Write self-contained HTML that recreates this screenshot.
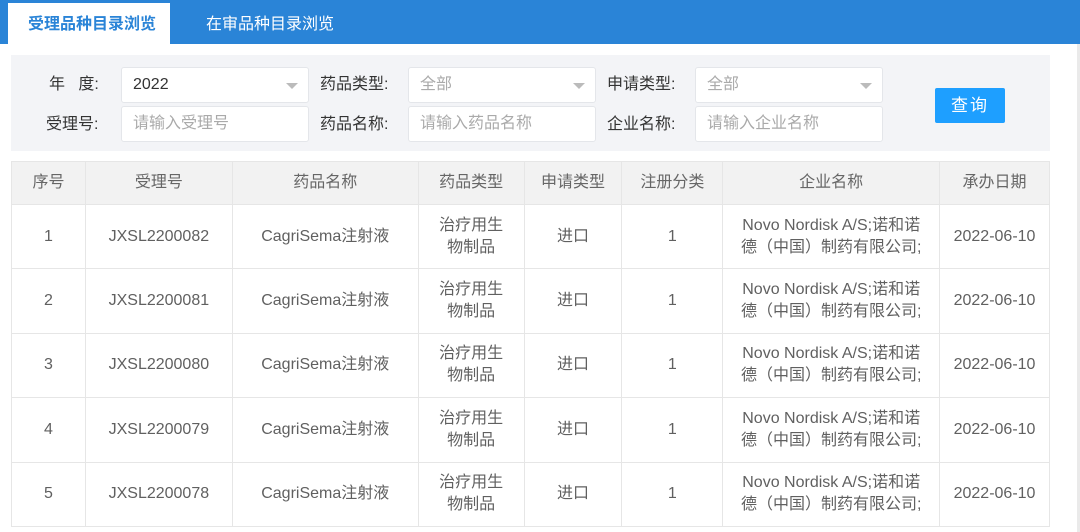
<!DOCTYPE html>
<html><head><meta charset="utf-8"><style>
*{margin:0;padding:0;box-sizing:border-box}
body{width:1080px;height:532px;overflow:hidden;background:#fff;font-family:"Liberation Sans","Noto Sans CJK SC",sans-serif;color:#555;position:relative}
.hdr{position:absolute;left:0;top:0;width:1080px;height:44px;background:#2a84d7}
.tab{position:absolute;top:3px;height:41px;font-size:16px;line-height:43px;text-align:center}
.t1{left:8px;width:162px;background:#fff;color:#2a84d7;font-weight:bold;padding-left:6px}
.t2{left:190px;width:160px;color:#fff}
.panel{position:absolute;left:11px;top:55px;width:1039px;height:96px;background:#f3f4f7}
.lbl{position:absolute;font-size:16px;color:#333;line-height:20px}
.in{position:absolute;background:#fff;border:1px solid #e4e6ea;border-radius:3px;height:36px;font-size:16px;line-height:34px;padding-left:11px;color:#aaa}
.in.v{color:#333}
.arr{position:absolute;right:10px;top:15px;width:0;height:0;border-left:6px solid transparent;border-right:6px solid transparent;border-top:6px solid #bbb}
.btn{position:absolute;left:935px;top:88px;width:70px;height:35px;background:#1e9fff;border-radius:2px;color:#fff;font-size:17px;text-align:center;line-height:35px;letter-spacing:2px}
table{position:absolute;left:11px;top:161px;width:1039px;border-collapse:collapse;font-size:16px;color:#606060}
td,th{border:1px solid #e6e6e6;text-align:center;font-weight:normal;line-height:22px}
th{background:#f2f2f2;height:43px;color:#666}
td{height:64.4px}
.sb{position:absolute;left:1077px;top:44px;width:3px;height:488px;background:#eaeaea}
</style></head><body>
<div class="hdr"></div>
<div class="tab t1">受理品种目录浏览</div>
<div class="tab t2">在审品种目录浏览</div>
<div class="sb"></div>
<div class="panel"></div>
<div class="lbl" style="left:49px;top:75px">年&nbsp;&nbsp;&nbsp;度:</div>
<div class="lbl" style="left:46px;top:115px">受理号:</div>
<div class="lbl" style="left:320px;top:75px">药品类型:</div>
<div class="lbl" style="left:320px;top:115px">药品名称:</div>
<div class="lbl" style="left:607px;top:75px">申请类型:</div>
<div class="lbl" style="left:607px;top:115px">企业名称:</div>
<div class="in v" style="left:121px;top:67px;width:188px">2022<span class="arr"></span></div>
<div class="in" style="left:121px;top:106px;width:188px">请输入受理号</div>
<div class="in" style="left:408px;top:67px;width:188px">全部<span class="arr"></span></div>
<div class="in" style="left:408px;top:106px;width:188px">请输入药品名称</div>
<div class="in" style="left:695px;top:67px;width:188px">全部<span class="arr"></span></div>
<div class="in" style="left:695px;top:106px;width:188px">请输入企业名称</div>
<div class="btn">查询</div>
<table>
<colgroup><col style="width:74px"><col style="width:147px"><col style="width:186px"><col style="width:106px"><col style="width:98px"><col style="width:101px"><col style="width:217px"><col style="width:110px"></colgroup>
<tr><th>序号</th><th>受理号</th><th>药品名称</th><th>药品类型</th><th>申请类型</th><th>注册分类</th><th>企业名称</th><th>承办日期</th></tr>
<tr><td>1</td><td>JXSL2200082</td><td>CagriSema注射液</td><td>治疗用生<br>物制品</td><td>进口</td><td>1</td><td>Novo Nordisk A/S;诺和诺<br>德（中国）制药有限公司;</td><td>2022-06-10</td></tr>
<tr><td>2</td><td>JXSL2200081</td><td>CagriSema注射液</td><td>治疗用生<br>物制品</td><td>进口</td><td>1</td><td>Novo Nordisk A/S;诺和诺<br>德（中国）制药有限公司;</td><td>2022-06-10</td></tr>
<tr><td>3</td><td>JXSL2200080</td><td>CagriSema注射液</td><td>治疗用生<br>物制品</td><td>进口</td><td>1</td><td>Novo Nordisk A/S;诺和诺<br>德（中国）制药有限公司;</td><td>2022-06-10</td></tr>
<tr><td>4</td><td>JXSL2200079</td><td>CagriSema注射液</td><td>治疗用生<br>物制品</td><td>进口</td><td>1</td><td>Novo Nordisk A/S;诺和诺<br>德（中国）制药有限公司;</td><td>2022-06-10</td></tr>
<tr><td>5</td><td>JXSL2200078</td><td>CagriSema注射液</td><td>治疗用生<br>物制品</td><td>进口</td><td>1</td><td>Novo Nordisk A/S;诺和诺<br>德（中国）制药有限公司;</td><td>2022-06-10</td></tr>
</table>
</body></html>
